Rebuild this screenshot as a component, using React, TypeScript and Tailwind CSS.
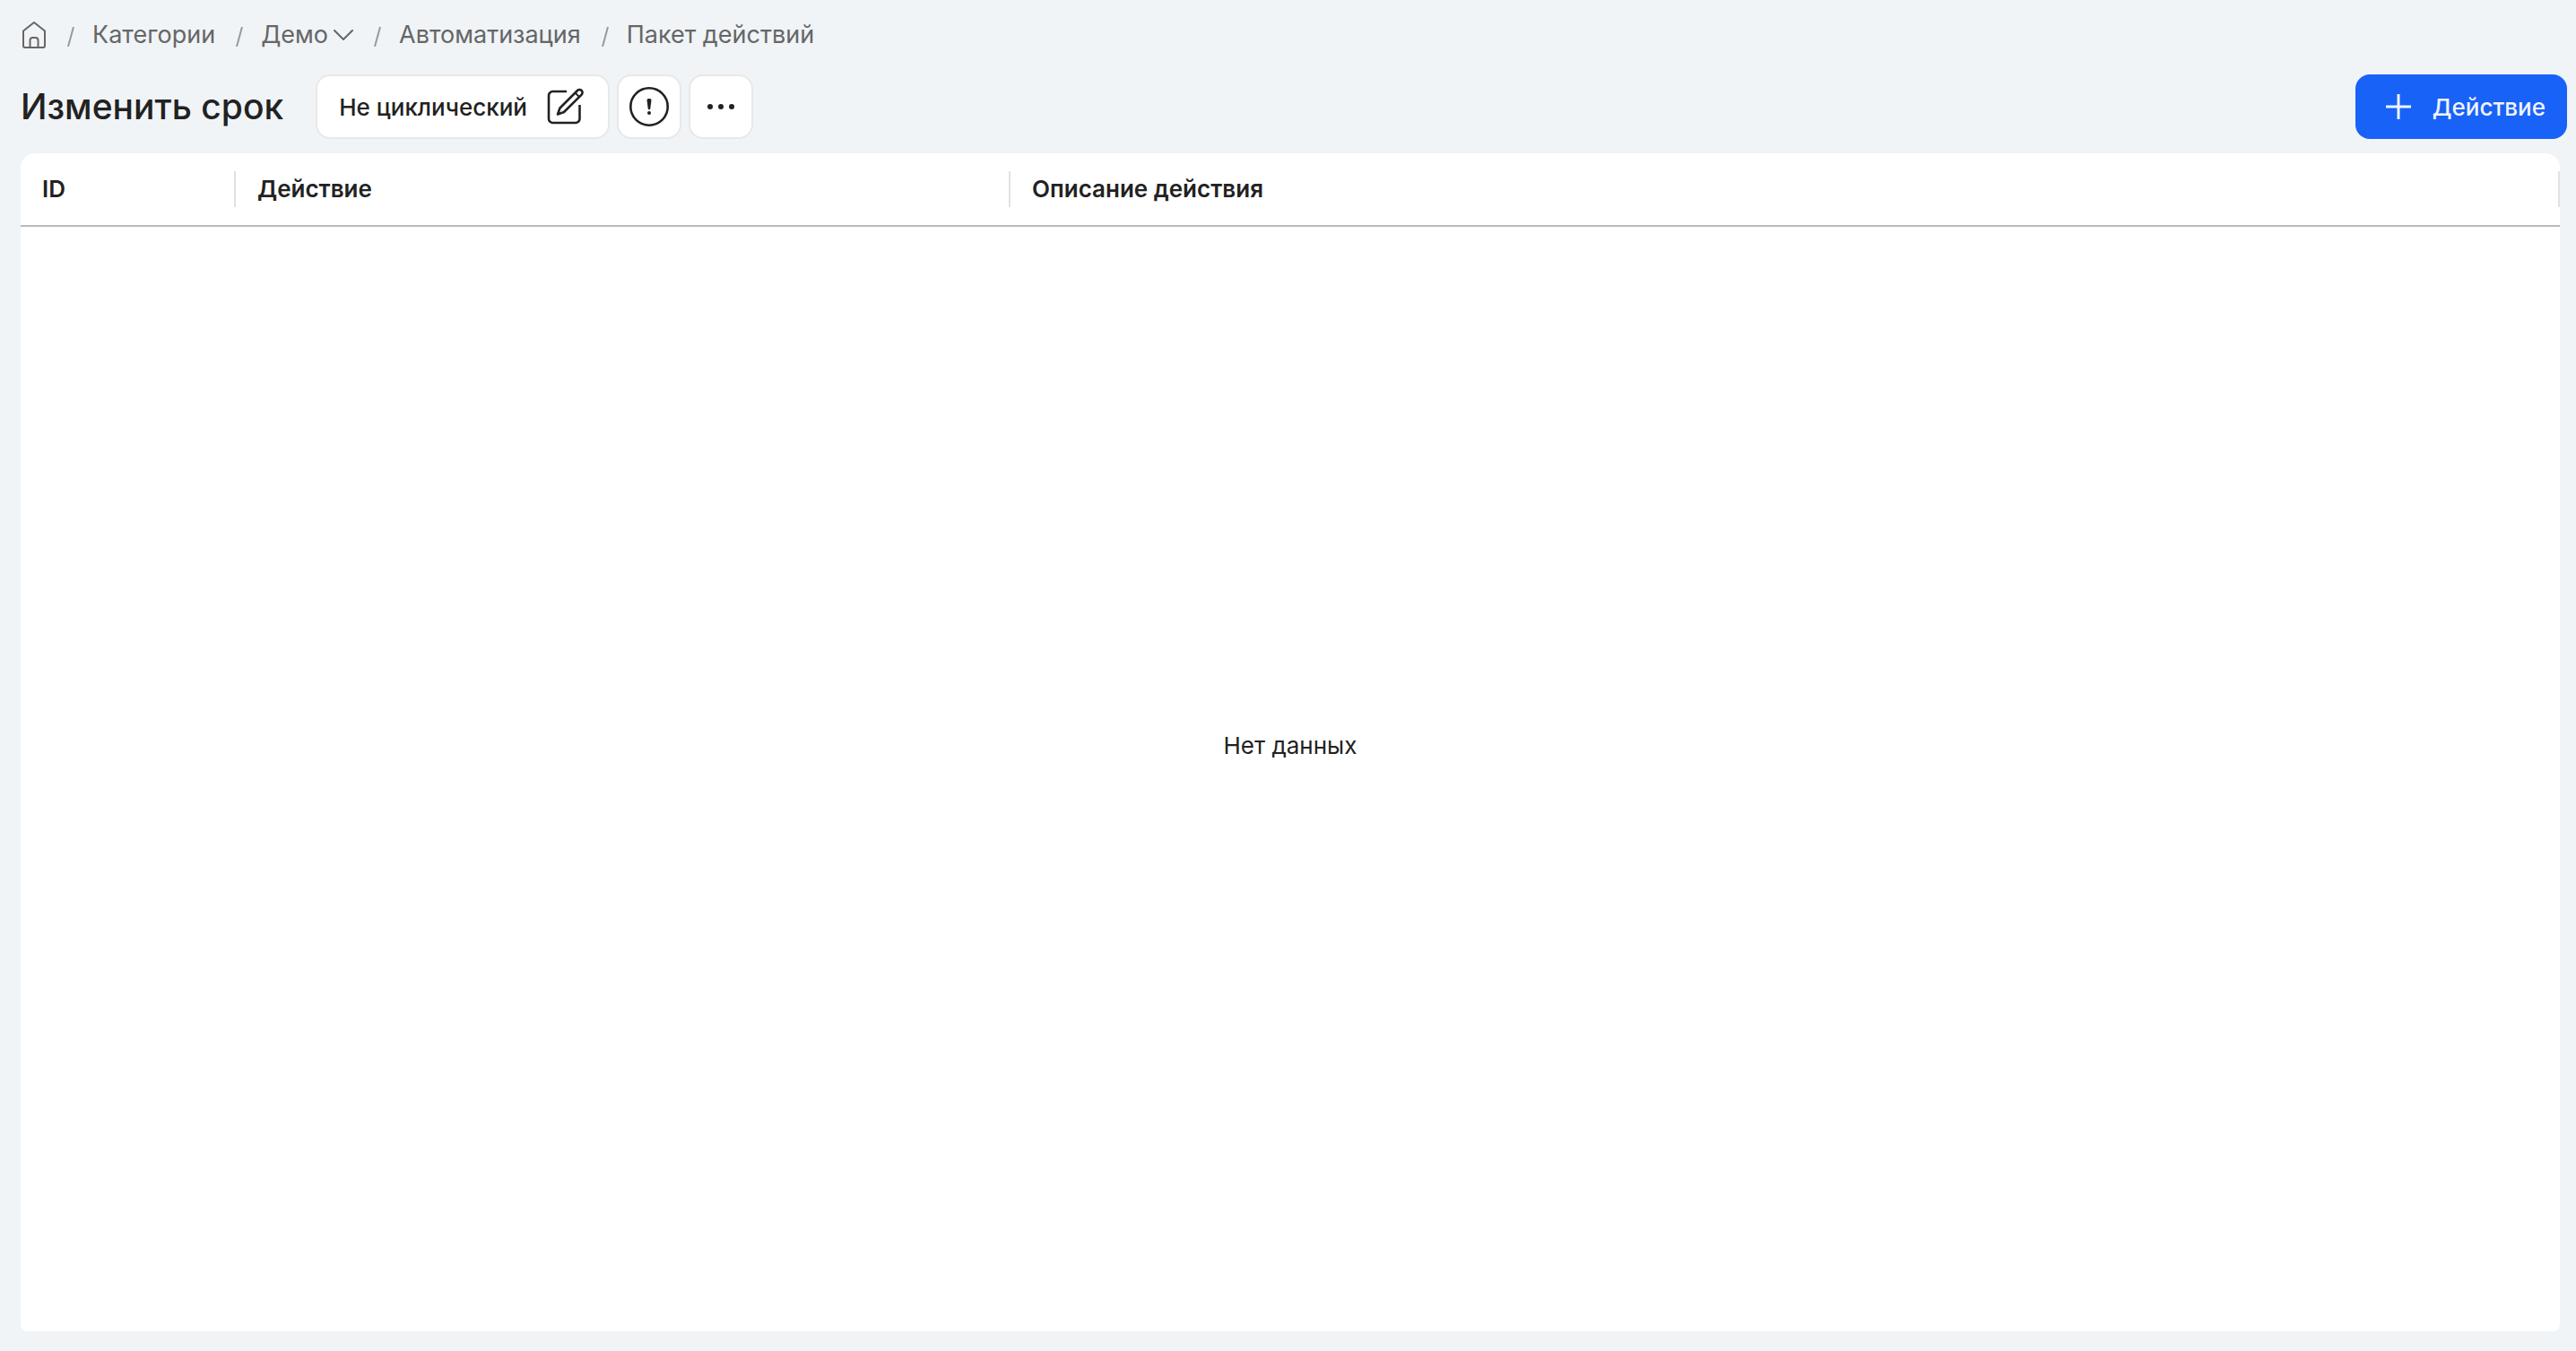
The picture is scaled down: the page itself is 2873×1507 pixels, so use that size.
import type { ReactNode } from "react"

const columns = [
  { name: "ID", width: "w-[240px]" },
  { name: "Действие", width: "w-[864px]" },
  { name: "Описание действия", width: "" },
]

function HomeIcon() {
  return (
    <svg width="28" height="32" viewBox="0 0 28 32" fill="none" stroke="currentColor" strokeWidth="2" strokeLinejoin="round" aria-hidden="true">
      <path d="M2 11.500 14 2l12 9.500V28a2 2 0 0 1-2 2H4a2 2 0 0 1-2-2Z" />
      <path d="M9.500 30V22a3 3 0 0 1 3-3h3a3 3 0 0 1 3 3v8" />
    </svg>
  )
}

function ChevronIcon() {
  return (
    <svg width="22" height="12" viewBox="0 0 22 12" fill="none" stroke="currentColor" strokeWidth="2" strokeLinecap="round" aria-hidden="true">
      <path d="m1 1 10 10L21 1" />
    </svg>
  )
}

function EditIcon() {
  return (
    <svg width="42" height="44" viewBox="0 0 42 44" fill="none" stroke="currentColor" strokeWidth="2.600" aria-hidden="true">
      <path d="M22 5H6.500A4.500 4.500 0 0 0 2 9.500v26A4.500 4.500 0 0 0 6.500 40H32a4.500 4.500 0 0 0 4.500-4.500V20" />
      <path d="M14.500 23.500 34 4a3.250 3.250 0 0 1 4.600 4.600L19 28l-7 2.500Z" strokeLinejoin="round" />
      <path d="m31.500 6.500 4.600 4.600" strokeWidth="2" />
    </svg>
  )
}

function AlertIcon() {
  return (
    <svg width="44" height="46" viewBox="0 0 44 46" fill="none" aria-hidden="true">
      <circle cx="22" cy="23" r="20.700" stroke="currentColor" strokeWidth="2.600" />
      <path d="M19.500 15.800a1.800 1.800 0 0 1 1.800-1.800h1.400a1.800 1.800 0 0 1 1.800 1.800l-1.200 9.200a1.300 1.300 0 0 1-2.600 0Z" fill="currentColor" />
      <circle cx="22" cy="30" r="2" fill="currentColor" />
    </svg>
  )
}

function DotsIcon() {
  return (
    <svg width="32" height="8" viewBox="0 0 32 8" fill="currentColor" aria-hidden="true">
      <circle cx="4" cy="4" r="3" />
      <circle cx="16" cy="4" r="3" />
      <circle cx="28" cy="4" r="3" />
    </svg>
  )
}

function PlusIcon() {
  return (
    <svg width="28" height="28" viewBox="0 0 28 28" stroke="currentColor" strokeWidth="3" aria-hidden="true">
      <path d="M14 0v28M0 14h28" />
    </svg>
  )
}

function Slash() {
  return (
    <svg width="8" height="22" viewBox="0 0 8 22" stroke="#999999" strokeWidth="2" className="mt-1" aria-hidden="true">
      <path d="M7 0 1 22" />
    </svg>
  )
}

function Crumb({ children }: { children: ReactNode }) {
  return (
    <li className="flex items-center gap-5">
      <Slash />
      <a href="#" className="flex items-center gap-1.5">
        {children}
      </a>
    </li>
  )
}

export default function App() {
  return (
    <div className="flex h-screen flex-col bg-[#f0f4f7] pb-[22px] font-[Inter,sans-serif] text-[#222222]">
      <nav aria-label="Навигация" className="px-6 pt-[19px] text-[27px] leading-10 text-[#666666]">
        <ol className="flex items-center gap-[23px]">
          <li>
            <a href="#" aria-label="Главная" className="block">
              <HomeIcon />
            </a>
          </li>
          <Crumb>Категории</Crumb>
          <Crumb>
            Демо
            <ChevronIcon />
          </Crumb>
          <Crumb>Автоматизация</Crumb>
          <Crumb>Пакет действий</Crumb>
        </ol>
      </nav>

      {/* заголовок и кнопки */}
      <header className="mt-6 mb-4 flex items-center gap-2 pr-2.5 pl-[23px] text-[26px] font-medium">
        <h1 className="mr-7 text-[39px] leading-[72px]">Изменить срок</h1>
        <button type="button" className="flex h-[72px] items-center gap-[22px] rounded-2xl border-2 border-[#e8e8e8] bg-white pr-[26px] pl-6">
          Не циклический
          <EditIcon />
        </button>
        <button type="button" aria-label="Информация" className="flex size-[72px] items-center justify-center rounded-2xl border-2 border-[#e8e8e8] bg-white">
          <AlertIcon />
        </button>
        <button type="button" aria-label="Ещё" className="flex size-[72px] items-center justify-center rounded-2xl border-2 border-[#e8e8e8] bg-white">
          <DotsIcon />
        </button>
        <button type="button" className="ml-auto flex h-[72px] items-center gap-6 rounded-2xl bg-[#1862f8] pr-6 pl-[34px] text-[#f0f4f8]">
          <PlusIcon />
          Действие
        </button>
      </header>

      <main className="mr-[18px] ml-[23px] grid flex-1 overflow-hidden rounded-t-2xl rounded-b-lg bg-white text-[26px]">
        <table className="h-full w-full table-fixed">
          <thead>
            <tr className="h-[81px] border-b-2 border-[#bbbbbb]">
              {columns.map((column) => (
                <th key={column.name} scope="col" className={`p-0 text-left font-semibold ${column.width}`}>
                  <div className="border-r-2 border-[#dde2e6] pl-6 leading-10">{column.name}</div>
                </th>
              ))}
            </tr>
          </thead>
          <tbody>
            <tr>
              <td colSpan={3} className="pb-19 text-center align-middle">
                Нет данных
              </td>
            </tr>
          </tbody>
        </table>
      </main>
    </div>
  )
}
